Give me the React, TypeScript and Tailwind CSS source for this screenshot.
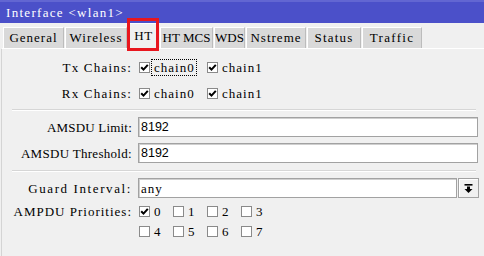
import React from "react";

const serif = { fontFamily: '"Liberation Serif", "Times New Roman", serif' };

function Check({ checked }: { checked: boolean }) {
  return (
    <div className="w-[11px] h-[11px] shrink-0 bg-white border border-[#8a8a8a] flex items-center justify-center">
      {checked && (
        <svg width="9" height="9" viewBox="0 0 9 9">
          <path d="M1.2 4.2 L3.5 6.6 L7.8 1.8" fill="none" stroke="#000" strokeWidth="2" />
        </svg>
      )}
    </div>
  );
}

function CheckItem({ checked, label, focus, w }: { checked: boolean; label: string; focus?: boolean; w: string }) {
  return (
    <div className={`flex items-center ${w}`}>
      <Check checked={checked} />
      {focus ? (
        <span className="ml-[1px] pl-[2px] pr-[1px] h-[17px] flex items-center border border-dotted border-black leading-none">{label}</span>
      ) : (
        <span className="ml-[4px] leading-none">{label}</span>
      )}
    </div>
  );
}

function Label({ children, t }: { children: React.ReactNode; t: string }) {
  return <div className={`w-[131px] shrink-0 text-right pr-[1px] leading-none whitespace-nowrap ${t}`}>{children}</div>;
}

function Sep() {
  return <div className="ml-[10px] mr-[8px] h-[1px] bg-[#d6d6d6] border-b border-white box-content" />;
}

function Input({ value }: { value: string }) {
  return (
    <div
      className="ml-[5px] w-[340px] h-[20px] bg-white border border-[#a2a2a2] shadow-[inset_1px_1px_0_#cfcfcf] flex items-center pl-[2px] text-[12.5px] tracking-normal"
      style={{ fontFamily: '"Liberation Sans", Arial, sans-serif' }}
    >
      {value}
    </div>
  );
}

const tabs = [
  { n: "General", w: "w-[61px]", t: "tracking-[1px]" },
  { n: "Wireless", w: "w-[62px]", t: "tracking-[1px]" },
  { n: "HT", w: "w-[31px]", t: "tracking-[0.5px]", sel: true },
  { n: "HT MCS", w: "w-[53px]", t: "tracking-[0px]" },
  { n: "WDS", w: "w-[31px]", t: "tracking-[0px]" },
  { n: "Nstreme", w: "w-[60px]", t: "tracking-[1px]" },
  { n: "Status", w: "w-[54px]", t: "tracking-[1.2px]" },
  { n: "Traffic", w: "w-[60px]", t: "tracking-[1.3px]" },
];

export default function App() {
  return (
    <div className="relative w-[484px] h-[256px] bg-[#f0f0f0] overflow-hidden text-[13px] tracking-[1px] text-black" style={serif}>
      <div className="h-[23px] bg-[#4b50c9] border-t-2 border-[#6266d2] flex items-center pl-[6px] text-white tracking-[1.3px]">
        Interface &lt;wlan1&gt;
      </div>
      <div className="flex items-end gap-[1px] pl-[3px] h-[25px]">
        {tabs.map((t) =>
          t.sel ? (
            <div key={t.n} className={`${t.w} ${t.t} h-[25px] bg-[#f0f0f0] border-t border-l border-white border-r border-r-[#b0b0b0] flex items-center justify-center`}>
              {t.n}
            </div>
          ) : (
            <div key={t.n} className={`${t.w} ${t.t} h-[21px] bg-[#d9d9d9] border-t border-l border-white border-r border-r-[#bcbcbc] flex items-center justify-center whitespace-nowrap overflow-hidden`}>
              {t.n}
            </div>
          )
        )}
      </div>
      <div className="h-[1px] bg-white ml-[2px]" />
      <div className="border-l border-[#d4d4d4] ml-[1px] h-[208px]">
        <div className="pt-[8px]">
          <div className="flex items-center h-[20px]">
            <Label t="tracking-[1.2px]">Tx Chains:</Label>
            <div className="flex items-center ml-[5px] pl-[1px]">
              <CheckItem checked label="chain0" focus w="w-[68px]" />
              <CheckItem checked label="chain1" w="w-[68px]" />
            </div>
          </div>
          <div className="flex items-center h-[20px] mt-[6px]">
            <Label t="tracking-[1.2px]">Rx Chains:</Label>
            <div className="flex items-center ml-[5px] pl-[1px]">
              <CheckItem checked label="chain0" w="w-[68px]" />
              <CheckItem checked label="chain1" w="w-[68px]" />
            </div>
          </div>
          <div className="mt-[6px]">
            <Sep />
          </div>
          <div className="flex items-center mt-[6px]">
            <Label t="tracking-[0.2px]">AMSDU Limit:</Label>
            <Input value="8192" />
          </div>
          <div className="flex items-center mt-[6px]">
            <Label t="tracking-[0.3px]">AMSDU Threshold:</Label>
            <Input value="8192" />
          </div>
          <div className="mt-[7px]">
            <Sep />
          </div>
          <div className="flex items-center mt-[6px]">
            <Label t="tracking-[1.6px]">Guard Interval:</Label>
            <div className="ml-[5px] w-[319px] h-[20px] bg-white border border-[#a2a2a2] shadow-[inset_1px_1px_0_#cfcfcf] flex items-center pl-[2px] leading-none">
              any
            </div>
            <div className="ml-[1px] w-[21px] h-[20px] border border-[#a2a2a2] bg-[#f0f0f0] shadow-[inset_1px_1px_0_#ffffff] flex items-center justify-center">
              <svg width="9" height="9" viewBox="0 0 9 9">
                <rect x="0.5" y="0" width="8" height="1.6" fill="#000" />
                <rect x="3" y="2.5" width="3" height="2.5" fill="#000" />
                <path d="M0.5 5 L8.5 5 L4.5 9 Z" fill="#000" />
              </svg>
            </div>
          </div>
          <div className="flex items-center h-[16px] mt-[5px]">
            <Label t="tracking-[1px]">AMPDU Priorities:</Label>
            <div className="flex items-center ml-[5px] pl-[1px]">
              <CheckItem checked label="0" w="w-[34px]" />
              <CheckItem checked={false} label="1" w="w-[34px]" />
              <CheckItem checked={false} label="2" w="w-[34px]" />
              <CheckItem checked={false} label="3" w="w-[34px]" />
            </div>
          </div>
          <div className="flex items-center h-[16px] mt-[4px]">
            <Label t="">{""}</Label>
            <div className="flex items-center ml-[5px] pl-[1px]">
              <CheckItem checked={false} label="4" w="w-[34px]" />
              <CheckItem checked={false} label="5" w="w-[34px]" />
              <CheckItem checked={false} label="6" w="w-[34px]" />
              <CheckItem checked={false} label="7" w="w-[34px]" />
            </div>
          </div>
        </div>
      </div>
      <div className="absolute left-[127px] top-[18px] w-[32px] h-[33px] border-[3px] border-[#e8161e]" />
    </div>
  );
}
